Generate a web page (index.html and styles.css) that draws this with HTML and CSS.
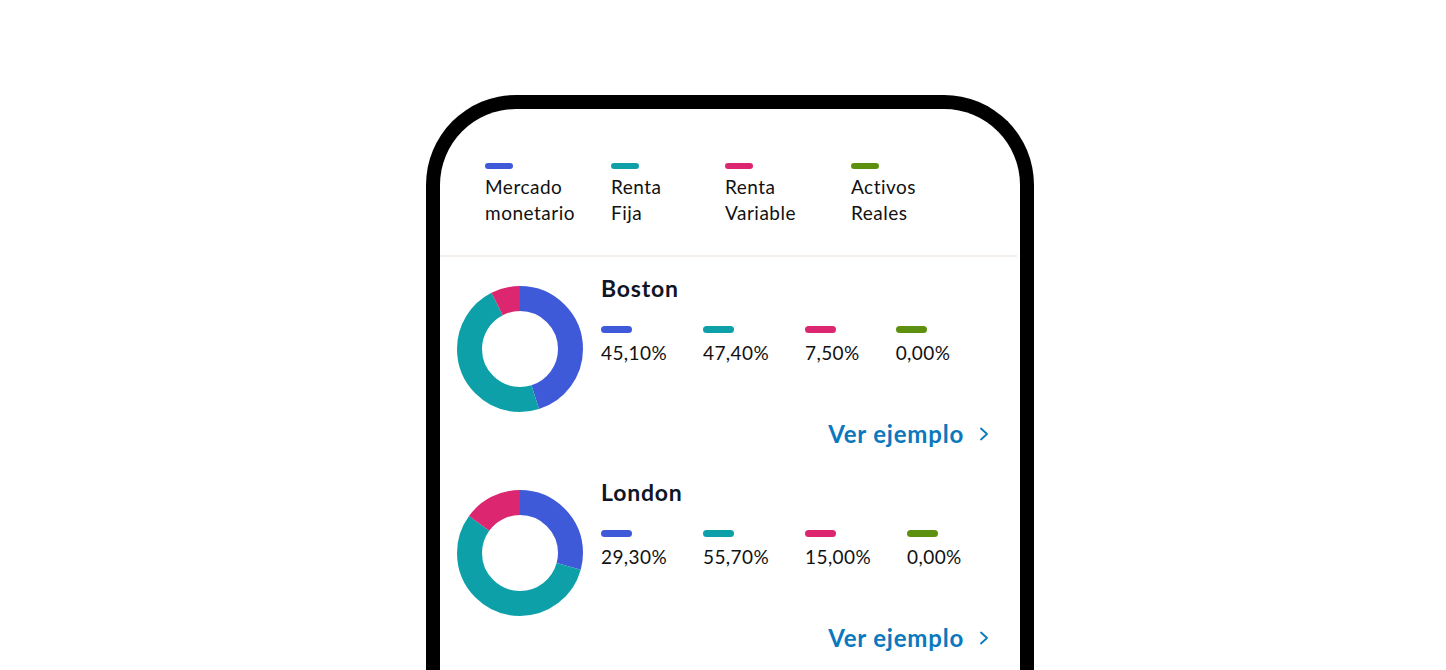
FILE: index.html
```html
<!DOCTYPE html>
<html lang="es">
<head>
<meta charset="utf-8">
<title>Carteras</title>
<link rel="stylesheet" href="styles.css">
</head>
<body>
<div class="phone">
  <div class="legend">
    <div class="legend-item"><span class="bar blue"></span><span class="legend-text">Mercado<br>monetario</span></div>
    <div class="legend-item"><span class="bar teal"></span><span class="legend-text">Renta<br>Fija</span></div>
    <div class="legend-item"><span class="bar pink"></span><span class="legend-text">Renta<br>Variable</span></div>
    <div class="legend-item"><span class="bar green"></span><span class="legend-text">Activos<br>Reales</span></div>
  </div>
  <div class="divider"></div>

  <div class="fund">
    <svg class="donut" viewBox="0 0 126 126" width="126" height="126">
      <g transform="rotate(-90 63 63)">
        <circle cx="63" cy="63" r="50.5" fill="none" stroke="#3f5ad8" stroke-width="25" pathLength="100" stroke-dasharray="45.1 54.9" stroke-dashoffset="0"/>
        <circle cx="63" cy="63" r="50.5" fill="none" stroke="#0ea0a8" stroke-width="25" pathLength="100" stroke-dasharray="47.4 52.6" stroke-dashoffset="-45.1"/>
        <circle cx="63" cy="63" r="50.5" fill="none" stroke="#dc2770" stroke-width="25" pathLength="100" stroke-dasharray="7.5 92.5" stroke-dashoffset="-92.5"/>
      </g>
    </svg>
    <div class="info">
      <h2 class="fund-name">Boston</h2>
      <div class="values">
        <div class="value"><span class="bar wide blue"></span><span class="pct">45,10%</span></div>
        <div class="value"><span class="bar wide teal"></span><span class="pct">47,40%</span></div>
        <div class="value"><span class="bar wide pink"></span><span class="pct">7,50%</span></div>
        <div class="value"><span class="bar wide green"></span><span class="pct">0,00%</span></div>
      </div>
      <a class="link" href="#">Ver ejemplo<svg class="chev" viewBox="0 0 10 14" width="10" height="14"><path d="M2 1.5 L8 7 L2 12.5" fill="none" stroke="#0a78bd" stroke-width="1.8" stroke-linecap="round" stroke-linejoin="round"/></svg></a>
    </div>
  </div>

  <div class="fund">
    <svg class="donut" viewBox="0 0 126 126" width="126" height="126">
      <g transform="rotate(-90 63 63)">
        <circle cx="63" cy="63" r="50.5" fill="none" stroke="#3f5ad8" stroke-width="25" pathLength="100" stroke-dasharray="29.3 70.7" stroke-dashoffset="0"/>
        <circle cx="63" cy="63" r="50.5" fill="none" stroke="#0ea0a8" stroke-width="25" pathLength="100" stroke-dasharray="55.7 44.3" stroke-dashoffset="-29.3"/>
        <circle cx="63" cy="63" r="50.5" fill="none" stroke="#dc2770" stroke-width="25" pathLength="100" stroke-dasharray="15 85" stroke-dashoffset="-85"/>
      </g>
    </svg>
    <div class="info">
      <h2 class="fund-name">London</h2>
      <div class="values">
        <div class="value"><span class="bar wide blue"></span><span class="pct">29,30%</span></div>
        <div class="value"><span class="bar wide teal"></span><span class="pct">55,70%</span></div>
        <div class="value"><span class="bar wide pink"></span><span class="pct">15,00%</span></div>
        <div class="value"><span class="bar wide green"></span><span class="pct">0,00%</span></div>
      </div>
      <a class="link" href="#">Ver ejemplo<svg class="chev" viewBox="0 0 10 14" width="10" height="14"><path d="M2 1.5 L8 7 L2 12.5" fill="none" stroke="#0a78bd" stroke-width="1.8" stroke-linecap="round" stroke-linejoin="round"/></svg></a>
    </div>
  </div>
</div>
</body>
</html>
```

FILE: styles.css
```css
html, body {
  margin: 0;
  padding: 0;
  background: #ffffff;
  overflow: hidden;
}

body {
  font-family: "Lato", "Noto Sans", sans-serif;
  color: #111111;
  height: 670px;
}

.phone {
  margin: 95px 0 0 426px;
  width: 580px;
  height: 700px;
  border: 14px solid #000000;
  border-bottom: none;
  border-radius: 90px 90px 0 0;
  background: #ffffff;
}

.legend {
  display: grid;
  grid-template-columns: 126px 114px 126px auto;
  padding: 54px 0 0 45px;
}

.legend-item {
  display: flex;
  flex-direction: column;
  align-items: flex-start;
}

.bar {
  display: block;
  width: 28px;
  height: 6px;
  border-radius: 3px;
}

.bar.wide {
  width: 31px;
  height: 7px;
  border-radius: 4px;
}

.blue { background: #3f5ad8; }
.teal { background: #0ea0a8; }
.pink { background: #dc2770; }
.green { background: #5e9010; }

.legend-text {
  margin-top: 5px;
  font-size: 19px;
  line-height: 26px;
  letter-spacing: 0.5px;
  color: #111111;
}

.divider {
  margin: 29px 3px 0 0;
  height: 2px;
  background: #f7f1ee;
}

.fund {
  display: flex;
  align-items: flex-start;
  padding: 17px 31px 30px 17px;
}

.fund + .fund {
  padding-top: 0;
}

.donut {
  flex: none;
  margin-top: 12px;
  display: block;
}

.info {
  flex: 1;
  margin-left: 18px;
  display: flex;
  flex-direction: column;
}

.fund-name {
  margin: 0;
  font-size: 23px;
  line-height: 28px;
  font-weight: 700;
  letter-spacing: 0.8px;
  color: #0f1626;
}

.values {
  display: flex;
  gap: 36px;
  margin-top: 24px;
}

.value {
  display: flex;
  flex-direction: column;
  align-items: flex-start;
}

.pct {
  margin-top: 8px;
  font-size: 19px;
  line-height: 24px;
  letter-spacing: 0.4px;
  color: #111111;
}

.link {
  align-self: flex-end;
  margin-top: 55px;
  display: flex;
  align-items: center;
  gap: 15px;
  font-size: 24px;
  line-height: 28px;
  font-weight: 700;
  letter-spacing: 0.8px;
  color: #0a78bd;
  text-decoration: none;
}

.chev {
  display: block;
}
```
